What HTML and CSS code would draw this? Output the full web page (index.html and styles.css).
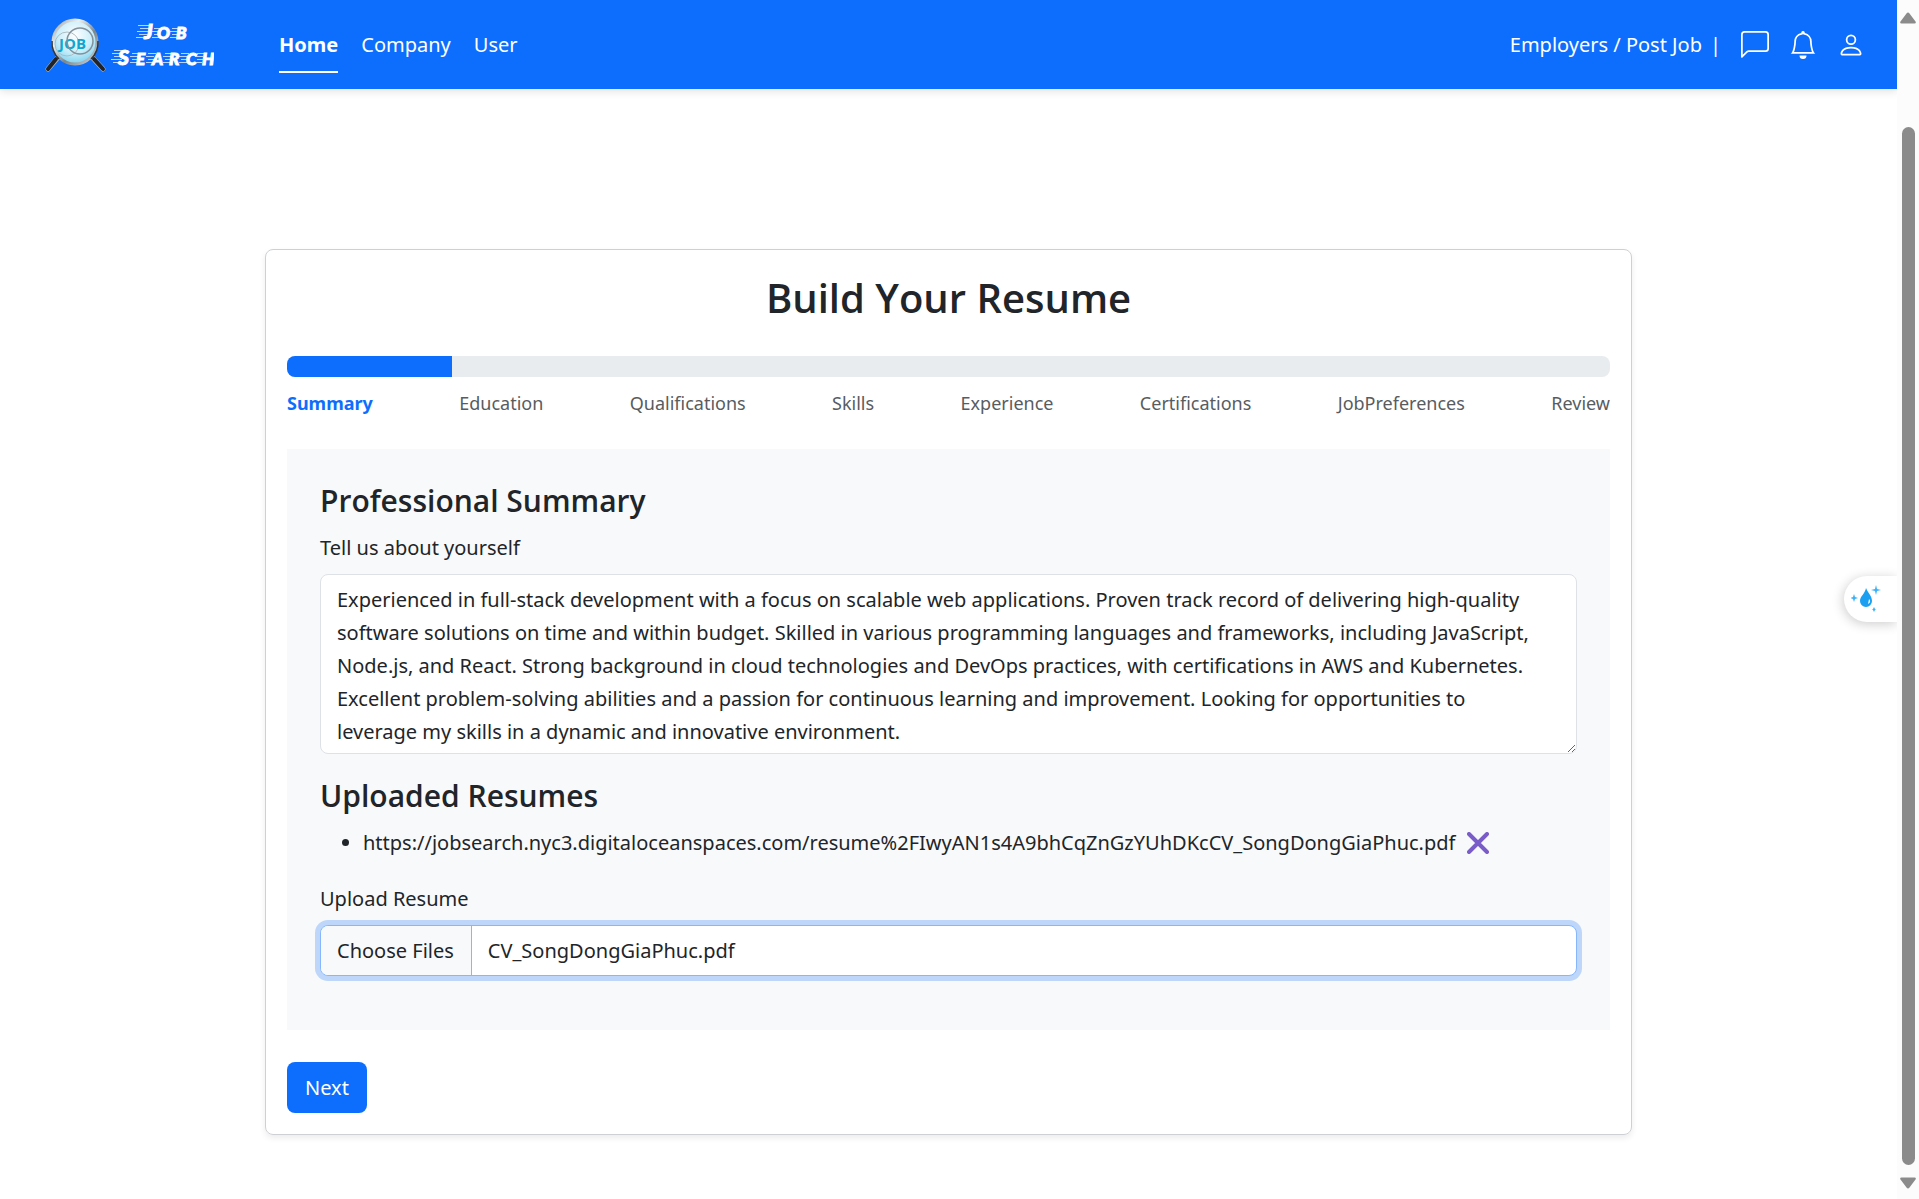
FILE: index.html
```html
<!DOCTYPE html>
<html lang="en">
<head>
<meta charset="utf-8">
<meta name="viewport" content="width=device-width, initial-scale=1">
<title>Job Search</title>
<link rel="stylesheet" href="styles.css">
</head>
<body>
<div class="app">
  <div class="page">
    <header class="navbar">
      <a class="brand" href="#" aria-label="Job Search">
        <svg class="brand-logo" width="180" height="64" viewBox="0 0 180 64">
          <defs>
            <radialGradient id="glass" cx="50%" cy="35%" r="65%">
              <stop offset="0" stop-color="#ffffff"/>
              <stop offset=".6" stop-color="#c9eefa"/>
              <stop offset="1" stop-color="#7fd3f0"/>
            </radialGradient>
            <linearGradient id="rim" x1="0" y1="0" x2="1" y2="1">
              <stop offset="0" stop-color="#8d969d"/>
              <stop offset=".3" stop-color="#eef1f2"/>
              <stop offset=".6" stop-color="#7b858c"/>
              <stop offset="1" stop-color="#d3dadd"/>
            </linearGradient>
          </defs>
          <g stroke-linecap="round">
            <path d="M26 42 14 56M56 42 69 56" stroke="#aab4ba" stroke-width="5"/>
            <path d="M22 46 14 56M60 46 69 56" stroke="#20242a" stroke-width="4"/>
          </g>
          <circle cx="41" cy="29" r="22" fill="url(#glass)" stroke="url(#rim)" stroke-width="3"/>
          <path d="M18 28a23 23 0 0 0 7 18M64 28a23 23 0 0 1-7 18" fill="none" stroke="#30353a" stroke-width="1.500"/>
          <circle cx="33" cy="31" r="12" fill="none" stroke="#aebbc2"/>
          <text class="badge-text" x="25" y="36">JOB</text>
          <circle cx="46" cy="28" r="13" fill="none" stroke="#84919a" stroke-width="1.500"/>
          <g stroke="#fff" stroke-width="1" opacity=".7">
            <path d="M104 12.500h12M106 15.500h9M103 18.500h13M105 21.500h9M102 24.500h12"/>
            <path d="M120 15.500h6M118 18.500h8M120 21.500h6M118 24.500h8M138 15.500h6M136 18.500h8M138 21.500h6M136 24.500h8"/>
            <path d="M80 37.500h12M78 40.500h10M80 43.500h11M77 46.500h11M79 49.500h8"/>
            <path d="M98 40.500h7M96 43.500h8M98 46.500h6M96 49.500h7M114 40.500h8M112 43.500h8M114 46.500h7M112 49.500h7M131 40.500h7M129 43.500h8M131 46.500h6M129 49.500h7M147 40.500h8M145 43.500h8M147 46.500h6M145 49.500h8M163 40.500h7M161 43.500h8M163 46.500h6M161 49.500h7"/>
          </g>
          <text class="mark mark-lg" x="110" y="26">J</text>
          <text class="mark" x="123 142" y="26">OB</text>
          <text class="mark mark-lg" x="84" y="52">S</text>
          <text class="mark" x="102 118 135 152 168" y="52">EARCH</text>
        </svg>
      </a>
      <nav class="nav-main" aria-label="Main">
        <a class="nav-link active" href="#">Home</a>
        <a class="nav-link" href="#">Company</a>
        <a class="nav-link" href="#">User</a>
      </nav>
      <div class="nav-tools">
        <a class="post-link" href="#">Employers / Post Job</a>
        <span class="divider">|</span>
        <button class="icon-btn" type="button" aria-label="Messages">
          <svg width="28" height="28" viewBox="0 0 16 16" fill="currentColor"><path d="M14 1a1 1 0 0 1 1 1v8a1 1 0 0 1-1 1H4.414A2 2 0 0 0 3 11.586l-2 2V2a1 1 0 0 1 1-1zM2 0a2 2 0 0 0-2 2v12.793a.5.5 0 0 0 .854.353l2.853-2.853A1 1 0 0 1 4.414 12H14a2 2 0 0 0 2-2V2a2 2 0 0 0-2-2z"/></svg>
        </button>
        <button class="icon-btn" type="button" aria-label="Notifications">
          <svg width="28" height="28" viewBox="0 0 16 16" fill="currentColor"><path d="M8 16a2 2 0 0 0 2-2H6a2 2 0 0 0 2 2M8 1.918l-.797.161A4 4 0 0 0 4 6c0 .628-.134 2.197-.459 3.742-.16.767-.376 1.566-.663 2.258h10.244c-.287-.692-.502-1.490-.663-2.258C12.134 8.197 12 6.628 12 6a4 4 0 0 0-3.203-3.920zM14.220 12c.223.447.481.801.78 1H1c.299-.199.557-.553.78-1C2.680 10.200 3 6.880 3 6c0-2.420 1.720-4.440 4.005-4.901a1 1 0 1 1 1.990 0A5 5 0 0 1 13 6c0 .88.32 4.200 1.220 6"/></svg>
        </button>
        <button class="icon-btn" type="button" aria-label="Account">
          <svg width="28" height="28" viewBox="0 0 16 16" fill="currentColor"><path d="M8 8a3 3 0 1 0 0-6 3 3 0 0 0 0 6m2-3a2 2 0 1 1-4 0 2 2 0 0 1 4 0m4 8c0 1-1 1-1 1H3s-1 0-1-1 1-4 6-4 6 3 6 4m-1-.004c-.001-.246-.154-.986-.832-1.664C11.516 10.680 10.289 10 8 10s-3.516.68-4.168 1.332c-.678.678-.83 1.418-.832 1.664z"/></svg>
        </button>
      </div>
    </header>

    <main class="content">
      <form class="card">
        <h1 class="card-title">Build Your Resume</h1>
        <div class="progress" role="progressbar" aria-label="Resume progress" aria-valuenow="12.5" aria-valuemin="0" aria-valuemax="100">
          <div class="progress-bar" style="width: 12.5%"></div>
        </div>
        <ol class="steps">
          <li class="step current">Summary</li>
          <li class="step">Education</li>
          <li class="step">Qualifications</li>
          <li class="step">Skills</li>
          <li class="step">Experience</li>
          <li class="step">Certifications</li>
          <li class="step">JobPreferences</li>
          <li class="step">Review</li>
        </ol>
        <section class="panel">
          <h2 class="panel-title">Professional Summary</h2>
          <label class="label" for="summary">Tell us about yourself</label>
          <textarea class="control textarea" id="summary" rows="5" spellcheck="false">Experienced in full-stack development with a focus on scalable web applications. Proven track record of delivering high-quality software solutions on time and within budget. Skilled in various programming languages and frameworks, including JavaScript, Node.js, and React. Strong background in cloud technologies and DevOps practices, with certifications in AWS and Kubernetes. Excellent problem-solving abilities and a passion for continuous learning and improvement. Looking for opportunities to leverage my skills in a dynamic and innovative environment.</textarea>
          <h2 class="panel-title">Uploaded Resumes</h2>
          <ul class="files">
            <li>
              <span class="file-row">
                <span class="file-url">https://jobsearch.nyc3.digitaloceanspaces.com/resume%2FIwyAN1s4A9bhCqZnGzYUhDKcCV_SongDongGiaPhuc.pdf</span>
                <button class="remove" type="button" aria-label="Remove resume">
                  <svg width="22" height="22" viewBox="0 0 22 22"><path d="M2 2l18 18M20 2 2 20" stroke="#7a5cc9" stroke-width="4" stroke-linecap="round"/></svg>
                </button>
              </span>
            </li>
          </ul>
          <label class="label" for="resume">Upload Resume</label>
          <input class="control file-input focused" id="resume" type="file" multiple>
        </section>
        <button class="btn-next" type="button">Next</button>
      </form>
    </main>

    <button class="assistant" type="button" aria-label="Assistant">
      <svg width="32" height="32" viewBox="0 0 32 32" fill="#1a9ff1">
        <path d="M15 5c2 5 6 8 6 13a6 6 0 0 1-12 0c0-5 5-7 6-13z"/>
        <path d="M18 16c2 2 1 4-1 5z" fill="#fff"/>
        <path d="M25 2l1 4 4 1-4 1-1 4-1-4-4-1 4-1zM3 11l1 3 3 1-3 1-1 3-1-3-3-1 3-1zM23 24l1 2 1 0-1 1-1 2-1-2-1 0 1-1z" fill="#3bb2f5"/>
      </svg>
    </button>
  </div>

  <div class="scrollbar" aria-hidden="true">
    <svg width="16" height="12" viewBox="0 0 16 12" fill="#8b8b8b"><path d="M6.500 1.500q1.500-2 3 0l6 8q1 2-1 2h-13q-2 0-1-2z"/></svg>
    <div class="track"><div class="thumb"></div></div>
    <svg width="16" height="12" viewBox="0 0 16 12" fill="#8b8b8b"><path d="M6.500 10.500q1.500 2 3 0l6-8q1-2-1-2h-13q-2 0-1 2z"/></svg>
  </div>
</div>
<script src="app.js"></script>
</body>
</html>
```
FILE: styles.css
```css
* {
  box-sizing: border-box;
}

body {
  margin: 0;
  background: #fff;
  color: #212529;
  font-family: "Noto Sans", "Open Sans", sans-serif;
  font-size: 20px;
  line-height: 32px;
}

button,
input,
textarea {
  font: inherit;
  color: inherit;
}

a {
  color: inherit;
  text-decoration: none;
}

.app {
  display: grid;
  grid-template-columns: minmax(0, 1fr) 22px;
  min-height: 100vh;
}

.page {
  position: relative;
}

/* Navigation bar */

.navbar {
  display: flex;
  align-items: center;
  min-height: 89px;
  padding: 0 32px 0 34px;
  background: #0d6efd;
  color: #fff;
  box-shadow: 0 3px 8px rgba(0, 0, 0, 0.1);
}

.brand {
  display: flex;
}

.badge-text {
  font: 700 15px/1 "Open Sans", sans-serif;
  fill: #12a5cf;
}

.mark {
  font: italic 900 17px/1 Lato, sans-serif;
  fill: #fff;
  stroke: #fff;
  stroke-width: 1px;
}

.mark-lg {
  font-size: 21px;
}

.nav-main {
  display: flex;
  gap: 23px;
  margin-left: 65px;
}

.nav-link {
  padding: 12px 0 10px;
  border-bottom: 2px solid transparent;
}

.nav-link.active {
  border-color: #fff;
  font-weight: 700;
}

.nav-tools {
  display: flex;
  align-items: center;
  gap: 20px;
  margin-left: auto;
}

.divider {
  margin-left: -12px;
}

.icon-btn {
  display: flex;
  padding: 0;
  border: 0;
  background: none;
}

/* Resume form */

.content {
  display: flex;
  justify-content: center;
  padding: 160px 24px 64px;
}

.card {
  width: 100%;
  max-width: 1367px;
  padding: 21px;
  border: 1px solid #ced0d3;
  border-radius: 8px;
  box-shadow: 0 3px 6px rgba(0, 0, 0, 0.08);
}

.card-title {
  margin: 0 0 32px;
  font-family: "Open Sans", sans-serif;
  font-size: 40px;
  font-weight: 600;
  line-height: 53px;
  text-align: center;
}

.progress {
  height: 21px;
  overflow: hidden;
  border-radius: 8px;
  background: #e9ecef;
}

.progress-bar {
  height: 100%;
  background: #0d6efd;
}

.steps {
  display: flex;
  justify-content: space-between;
  margin: 12px 0 32px;
  padding: 0;
  list-style: none;
  color: #585c5f;
  font-size: 18px;
  line-height: 28px;
}

.step.current {
  color: #0d6efd;
  font-weight: 700;
}

.panel {
  margin-bottom: 32px;
  padding: 32px 33px 54px;
  background: #f8f9fa;
}

.panel-title {
  margin: 0 0 11px;
  font-family: "Open Sans", sans-serif;
  font-size: 30px;
  font-weight: 600;
  line-height: 40px;
}

.label {
  display: block;
  margin-bottom: 10px;
}

.control {
  display: block;
  width: 100%;
  border: 1px solid #dee2e6;
  border-radius: 8px;
  background: #fff;
}

.textarea {
  height: 180px;
  margin-bottom: 22px;
  padding: 8px 40px 0 16px;
  line-height: 33px;
  resize: vertical;
}

.files {
  margin: 0 0 24px;
  padding-left: 43px;
}

.file-row {
  display: flex;
  align-items: center;
  gap: 12px;
}

.file-url {
  overflow-wrap: anywhere;
}

.remove {
  display: flex;
  padding: 0;
  border: 0;
  background: none;
}

.file-input {
  height: 51px;
  padding: 0;
  line-height: 49px;
  overflow: hidden;
}

.file-input.focused {
  border-color: #86b7fe;
  box-shadow: 0 0 0 5px rgba(13, 110, 253, 0.25);
}

.file-input::file-selector-button {
  height: 49px;
  margin: 0 16px 0 0;
  padding: 0 17px 0 16px;
  border: 0;
  border-right: 1px solid #86b7fe;
  background: #f8f9fa;
  color: #212529;
  font: inherit;
}

.btn-next {
  display: block;
  height: 51px;
  padding: 0 18px;
  border: 0;
  border-radius: 8px;
  background: #0d6efd;
  color: #fff;
}

/* Floating assistant tab, docked to the window's right edge */

.assistant {
  position: absolute;
  top: 576px;
  right: 0;
  display: flex;
  align-items: center;
  width: 53px;
  height: 46px;
  padding: 0 0 0 7px;
  border: 0;
  border-radius: 23px 0 0 23px;
  background: #fff;
  box-shadow: -1px 2px 12px rgba(0, 0, 0, 0.2);
  clip-path: inset(-20px 0 -20px -20px);
}

/* Scroll track */

.scrollbar {
  position: sticky;
  top: 0;
  display: flex;
  flex-direction: column;
  align-items: center;
  height: 100vh;
  padding: 12px 0 10px;
  background: #fcfcfc;
}

.track {
  display: flex;
  flex: 1;
  flex-direction: column;
  justify-content: flex-end;
  padding-bottom: 12px;
}

.thumb {
  width: 13px;
  height: 91%;
  border-radius: 7px;
  background: #8b8b8b;
}
```
FILE: app.js
```js
const chosen = new DataTransfer();
chosen.items.add(new File(["resume"], "CV_SongDongGiaPhuc.pdf", { type: "application/pdf" }));
document.getElementById("resume").files = chosen.files;
```
